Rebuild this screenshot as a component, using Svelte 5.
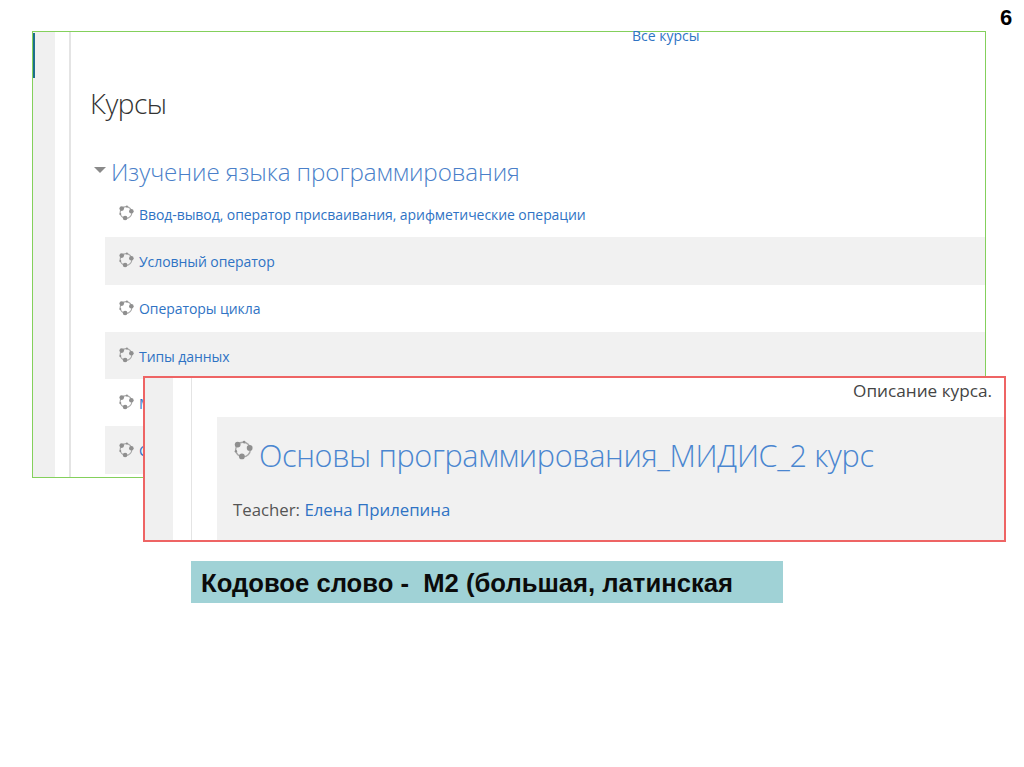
<script>
  const rows = [
    { label: 'Ввод-вывод, оператор присваивания, арифметические операции' },
    { label: 'Условный оператор', alt: true },
    { label: 'Операторы цикла' },
    { label: 'Типы данных', alt: true },
    { label: 'Массивы' },
    { label: 'Строки', alt: true }
  ];
</script>

{#snippet course(cls)}
  <svg class={cls} viewBox="0 0 18 18" aria-hidden="true">
    <circle class="link" cx="9" cy="9" r="6.6" />
    <circle cx="4.2" cy="4.6" r="2.6" />
    <circle cx="15" cy="7.6" r="2.6" />
    <circle cx="8" cy="15.2" r="2.6" />
    <circle cx="2.6" cy="10.6" r="1.1" />
    <circle cx="10" cy="2.3" r="1.2" />
  </svg>
{/snippet}

<main class="slide">
  <div class="page-number">6</div>

  <section class="shot shot-list">
    <div class="rail"><span class="tab"></span></div>
    <div class="gutter"></div>
    <div class="content">
      <a class="all" href="#top">Все курсы</a>
      <h1>Курсы</h1>
      <h2><span class="caret"></span>Изучение языка программирования</h2>
      <ul>
        {#each rows as row}
          <li class:alt={row.alt}>
            {@render course('icon')}
            <a href="#top">{row.label}</a>
          </li>
        {/each}
      </ul>
    </div>
  </section>

  <section class="shot shot-course">
    <div class="rail"></div>
    <div class="gutter"></div>
    <div class="content">
      <p class="desc">Описание курса.</p>
      <div class="card">
        <div class="card-title">
          {@render course('icon big')}
          <a href="#top">Основы программирования_МИДИС_2 курс</a>
        </div>
        <p class="teacher">Teacher: <a href="#top">Елена Прилепина</a></p>
      </div>
    </div>
  </section>

  <p class="code">Кодовое слово -&nbsp; М2 (большая, латинская</p>
</main>

<style>
  :global(body) { margin: 0; background: #fff; }
  .slide {
    position: relative;
    width: 1024px;
    height: 767px;
    overflow: hidden;
    background: #fff;
    font-family: "Open Sans", "Noto Sans", sans-serif;
  }
  a { color: #2f73c4; text-decoration: none; }
  .page-number {
    position: absolute;
    top: 5px;
    left: 1000px;
    font: bold 22px/26px "Liberation Sans", sans-serif;
    color: #000;
  }
  .shot {
    position: absolute;
    box-sizing: border-box;
    display: flex;
    background: #fff;
  }
  .shot-list {
    left: 32px;
    top: 31px;
    width: 954px;
    height: 447px;
    border: 1px solid #84d05c;
  }
  .shot-list .rail { position: relative; width: 22px; background: #f0f0f0; }
  .tab { position: absolute; left: 0; top: 1px; width: 2px; height: 45px; background: #1c6e8c; }
  .shot-list .gutter { width: 14px; border-right: 2px solid #e4e4e4; }
  .content { flex: 1; min-width: 0; }
  .shot-list .content { padding-left: 20px; }
  .all {
    display: block;
    margin: 0 0 0 541px;
    font-size: 14px;
    line-height: 8px;
    height: 8px;
  }
  h1 {
    margin: 44px 0 0 -1px;
    font-size: 28px;
    line-height: 38px;
    font-weight: 300;
    color: #333;
    letter-spacing: -0.5px;
  }
  h2 {
    margin: 34px 0 0 3px;
    display: flex;
    align-items: center;
    font-size: 24.2px;
    line-height: 32px;
    font-weight: 300;
    color: #4a7fc9;
    letter-spacing: -0.1px;
  }
  .caret {
    width: 0;
    height: 0;
    margin-right: 5px;
    margin-bottom: 4px;
    border: 6.5px solid transparent;
    border-top: 6px solid #8a8a8a;
    border-bottom: 0;
  }
  ul { list-style: none; margin: 2px 0 0 14px; padding: 0; }
  li {
    box-sizing: border-box;
    display: flex;
    align-items: center;
    height: 47.3px;
    padding: 1px 0 0 13px;
    font-size: 14px;
  }
  li a { letter-spacing: -0.07px; }
  li.alt { background: #f1f1f1; }
  .icon { width: 16px; height: 17px; margin-right: 5px; margin-top: -3px; fill: #8f8f8f; flex: none; }
  .link { fill: none; stroke: #a8a8a8; stroke-width: 1.3; }
  .shot-course {
    left: 143px;
    top: 376px;
    width: 863px;
    height: 166px;
    border: 2px solid #ee6464;
    overflow: hidden;
  }
  .shot-course .rail { width: 28px; background: #f0f0f0; }
  .shot-course .gutter { width: 18px; border-right: 1px solid #e4e4e4; }
  .shot-course .content { padding-left: 25px; }
  .desc {
    margin: 0;
    height: 39px;
    padding-right: 12px;
    text-align: right;
    font-size: 17.2px;
    line-height: 26px;
    color: #444;
  }
  .card { height: 123px; background: #f1f1f1; box-sizing: border-box; padding: 17px 0 0 16px; }
  .card-title { display: flex; align-items: center; height: 42px; }
  .icon.big { width: 20px; height: 21px; margin: -12px 6px 0 0; }
  .card-title a { font-size: 30.6px; line-height: 42px; font-weight: 300; color: #4a86d0; letter-spacing: -0.35px; white-space: nowrap; }
  .teacher { margin: 22px 0 0; font-size: 16.8px; line-height: 24px; color: #555; }
  .code {
    position: absolute;
    box-sizing: border-box;
    left: 191px;
    top: 561px;
    width: 592px;
    height: 42px;
    margin: 0;
    padding-left: 10px;
    background: #a0d2d6;
    color: #0b0b0b;
    font: bold 25.65px/44px "Liberation Sans", sans-serif;
  }
</style>
